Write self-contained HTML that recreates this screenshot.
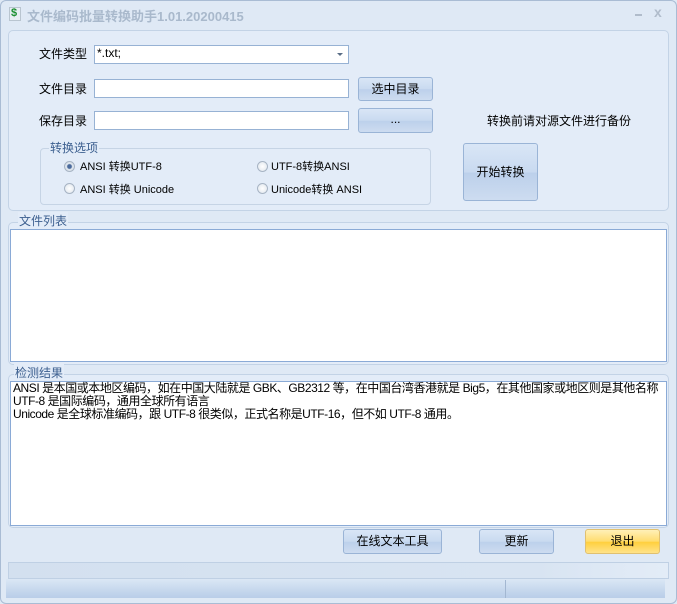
<!DOCTYPE html>
<html><head><meta charset="utf-8"><style>
*{margin:0;padding:0;box-sizing:border-box}
body{width:677px;height:604px;overflow:hidden;background:#dfe9f5;font-family:"Liberation Sans","Noto Sans CJK SC",sans-serif;font-size:12px;color:#000;position:relative}
.a{position:absolute}
.win{left:0;top:0;width:677px;height:604px;border:1px solid #a9bcd4;border-radius:6px;background:#dfe9f5}
.panel{border:1px solid #c3d3e6;border-radius:5px;background:#e3ecf8}
.inp{background:#fff;border:1px solid #97b2d4}
.btn{border:1px solid #9ab4d6;border-radius:3px;background:linear-gradient(#d9e6f6,#c9daf0 50%,#bcd0eb 52%,#cddcf0);text-align:center}
.lab{white-space:nowrap}
.rad{width:11px;height:11px;border-radius:50%;border:1px solid #a7b4c4;background:radial-gradient(#fff,#dde4ec)}
.leg{color:#3c5f8f;background:#e3ecf8;padding:0 1px;white-space:nowrap}
.sm{font-size:11px}
</style></head><body>
<div class="a win"></div>
<div class="a" style="left:9px;top:7px;width:12px;height:14px;background:#e8eef4;border:1px solid #b9c5d0"></div>
<div class="a" style="left:11px;top:7px;color:#1a8f2f;font-weight:bold;font-size:11px">$</div>
<div class="a lab" style="left:27px;top:6px;color:#a9b9cc;font-weight:bold;font-size:13px">文件编码批量转换助手1.01.20200415</div>
<div class="a" style="left:635px;top:14px;width:7px;height:2px;background:#b0bccb"></div>
<div class="a" style="left:654px;top:4px;color:#b0bccb;font-size:14px;font-weight:bold">x</div>

<div class="a panel" style="left:8px;top:30px;width:661px;height:181px"></div>
<div class="a lab" style="left:39px;top:45px">文件类型</div>
<div class="a inp" style="left:94px;top:45px;width:255px;height:19px"></div>
<div class="a lab" style="left:97px;top:46px">*.txt;</div>
<div class="a" style="left:337px;top:53px;border:3px solid transparent;border-top:3px solid #5a6d86"></div>
<div class="a lab" style="left:39px;top:80px">文件目录</div>
<div class="a inp" style="left:94px;top:79px;width:255px;height:19px"></div>
<div class="a btn" style="left:358px;top:77px;width:75px;height:24px;line-height:22px">选中目录</div>
<div class="a lab" style="left:39px;top:112px">保存目录</div>
<div class="a inp" style="left:94px;top:111px;width:255px;height:19px"></div>
<div class="a btn" style="left:358px;top:108px;width:75px;height:25px;line-height:21px">...</div>
<div class="a lab" style="left:487px;top:112px">转换前请对源文件进行备份</div>

<div class="a" style="left:40px;top:148px;width:391px;height:57px;border:1px solid #c6d4e5;border-radius:4px"></div>
<div class="a leg" style="left:49px;top:139px">转换选项</div>
<div class="a rad" style="left:64px;top:161px;background:radial-gradient(#4a6a9c 30%,#dde4ec 45%)"></div>
<div class="a lab sm" style="left:80px;top:158px">ANSI 转换UTF-8</div>
<div class="a rad" style="left:64px;top:183px"></div>
<div class="a lab sm" style="left:80px;top:181px">ANSI 转换 Unicode</div>
<div class="a rad" style="left:257px;top:161px"></div>
<div class="a lab sm" style="left:271px;top:158px">UTF-8转换ANSI</div>
<div class="a rad" style="left:257px;top:183px"></div>
<div class="a lab sm" style="left:271px;top:181px">Unicode转换 ANSI</div>
<div class="a btn" style="left:463px;top:143px;width:75px;height:58px;line-height:56px">开始转换</div>

<div class="a panel" style="left:8px;top:222px;width:661px;height:143px"></div>
<div class="a leg" style="left:18px;top:212px">文件列表</div>
<div class="a inp" style="left:10px;top:229px;width:657px;height:133px;border-color:#8aaad6"></div>

<div class="a panel" style="left:8px;top:374px;width:661px;height:154px"></div>
<div class="a leg" style="left:14px;top:364px">检测结果</div>
<div class="a inp" style="left:10px;top:381px;width:657px;height:145px;border-color:#8aaad6"></div>
<div class="a" style="left:13px;top:382px;line-height:13px;white-space:nowrap;letter-spacing:-0.45px">ANSI 是本国或本地区编码，如在中国大陆就是 GBK、GB2312 等，在中国台湾香港就是 Big5，在其他国家或地区则是其他名称<br>UTF-8 是国际编码，通用全球所有语言<br>Unicode 是全球标准编码，跟 UTF-8 很类似，正式名称是UTF-16，但不如 UTF-8 通用。</div>

<div class="a btn" style="left:343px;top:529px;width:99px;height:25px;line-height:23px">在线文本工具</div>
<div class="a btn" style="left:479px;top:529px;width:75px;height:25px;line-height:23px">更新</div>
<div class="a btn" style="left:585px;top:529px;width:75px;height:25px;line-height:23px;border-color:#e0c070;background:linear-gradient(#fff0b8,#ffdc6e 50%,#ffcf3c 52%,#ffe38a)">退出</div>

<div class="a" style="left:8px;top:562px;width:661px;height:17px;border:1px solid #bfd0e4;background:linear-gradient(90deg,#d3e0ef,#d8e4f2 80%,#e3ecf7)"></div>
<div class="a" style="left:6px;top:579px;width:659px;height:19px;background:linear-gradient(#dbe7f5,#c9daee 50%,#b9cde8)"></div>
<div class="a" style="left:505px;top:580px;width:1px;height:18px;background:#a3b7d1"></div>
</body></html>
